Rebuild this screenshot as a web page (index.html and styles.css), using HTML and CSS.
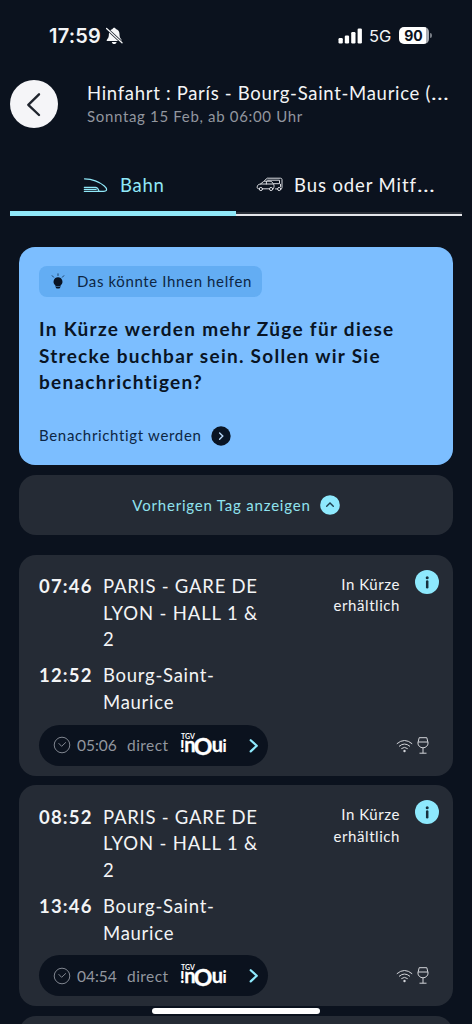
FILE: index.html
```html
<!DOCTYPE html>
<html lang="de">
<head>
<meta charset="utf-8">
<title>Hinfahrt</title>
<link rel="stylesheet" href="styles.css">
</head>
<body>
<svg class="defs" width="0" height="0" aria-hidden="true">
  <symbol id="clock" viewBox="0 0 18 18"><circle cx="9" cy="9" r="7.8"/><path d="M5.6 7.2l3 3.1 4.3-4"/></symbol>
  <symbol id="wifi" viewBox="0 0 17 14"><path d="M.8 4.8Q8.5-1.8 16.2 4.8M3 7.4q5.5-4.700 11 0M5.300 9.700q3.200-2.600 6.400 0"/><circle class="dot" cx="8.500" cy="12" r="1.200"/></symbol>
  <symbol id="glass" viewBox="0 0 12 17"><path d="M2.200.7h7.600l1.300 5.200c0 2.800-2.200 4.900-5.100 4.900S.9 8.700.9 5.900zM1 5h10M6 10.800v5.400M2.500 16.200h7"/></symbol>
</svg>
<div class="screen">
  <div class="status">
    <span class="clock">17:59</span>
    <svg class="bell" width="17" height="18" viewBox="0 0 17 18"><path fill="#f5f6f8" d="M8.200.8c.9 0 1.500.6 1.600 1.300 2.400.7 3.700 2.500 3.700 5 0 3.200.7 4.200 2 5.600.5.700.2 1.400-.6 1.400H1.500c-.8 0-1.100-.7-.6-1.400 1.300-1.400 2-2.400 2-5.600 0-2.500 1.300-4.300 3.700-5C6.700 1.400 7.300.8 8.200.8zM5.800 15h4.800c-.3 1.400-1.200 2.100-2.400 2.100S6.100 16.400 5.800 15z"/><path d="M.2 1.200l16 14.700" stroke="#0b121e" stroke-width="2.700"/><path d="M.6 1.500l15.400 14.300" stroke="#f5f6f8" stroke-width="1.300" stroke-linecap="round"/></svg>
    <svg class="signal" width="25" height="16" viewBox="0 0 25 16" fill="#fff"><rect x=".5" y="10" width="4.300" height="5.500" rx="1.200"/><rect x="6.800" y="7.500" width="4.300" height="8" rx="1.200"/><rect x="13.200" y="4" width="4.300" height="11.500" rx="1.200"/><rect x="19.600" y=".5" width="4.300" height="15" rx="1.200"/></svg>
    <span class="net">5G</span>
    <span class="battery">90</span><span class="nub"></span>
  </div>

  <header class="head">
    <span class="back"><svg width="48" height="48" viewBox="0 0 48 48" fill="none" stroke="#20252e" stroke-width="2.400" stroke-linecap="round" stroke-linejoin="round"><path d="M29 14.300L18.300 24.800 29 35"/></svg></span>
    <div class="titles">
      <div class="title">Hinfahrt : París - Bourg-Saint-Maurice (<span class="dots">…</span></div>
      <div class="subtitle">Sonntag 15 Feb, ab 06:00 Uhr</div>
    </div>
  </header>

  <nav class="tabs">
    <div class="tab active">
      <svg width="25" height="16" viewBox="0 0 25 16" fill="none" stroke="#90e8f8" stroke-width="1.200" stroke-linecap="round"><path d="M1.500 1.800c9.500.2 14.500 2.600 19.800 7.200 3.400 2.900 3 5.300-.8 5.300H1.300M1.300 10.300h11.200c1.700 0 2.800 1.700 3.500 3.800M1.300 12.300h11.900"/></svg>
      <span class="tab-a">Bahn</span>
    </div>
    <div class="tab">
      <svg width="27" height="15" viewBox="0 0 27 15" fill="none" stroke="#d9dbe0" stroke-width="1" stroke-linecap="round" stroke-linejoin="round"><path d="M8.500 3.600L11.300 1.200h13.200c1 0 1.500.5 1.500 1.500v7.800c0 1-.6 1.600-1.400 1.600M11.500 3.200h12v3.500h-5.700M3.200 11.800c-1.700 0-2.200-.6-2-1.900.2-1.900 1.300-2.500 3.300-2.900l2.700-2.200c.5-.4 1-.6 1.700-.6h5.200c.8 0 1.500.3 2 .9l1.500 2.100c.7.900.7 3.200-.4 4.600M6.600 11.800h6.800M4.500 7h12.700M10.400 4.300V7M19.500 11.900h2M24.500 7.300v2.200"/><circle cx="4.900" cy="12" r="1.600"/><circle cx="15.100" cy="12" r="1.600"/><circle cx="23.200" cy="12" r="1.600"/></svg>
      <span class="tab-b">Bus oder Mitf<span class="dots">…</span></span>
    </div>
  </nav>

  <main class="list">
    <section class="notice">
      <div class="hint">
        <svg width="16" height="17" viewBox="0 0 16 17"><path d="M8 4.300a4.400 4.400 0 0 1 2.700 7.900l-.5 2.200c-.6 1.600-3.800 1.600-4.400 0l-.5-2.200A4.400 4.400 0 0 1 8 4.300z" fill="#091424"/><path d="M8 .8v1.700M2.200 2.700l1.400 1.500M13.800 2.700l-1.400 1.500" stroke="#17395f" stroke-width=".9" stroke-linecap="round"/><path d="M5.800 13.500h4.300" stroke="#63adf3" stroke-width=".5"/></svg>
        <span class="hint-text">Das könnte Ihnen helfen</span>
      </div>
      <h2 class="question"><span class="q1">In Kürze werden mehr Züge für diese</span><br><span class="q2">Strecke buchbar sein. Sollen wir Sie</span><br><span class="q3">benachrichtigen?</span></h2>
      <div class="notify"><span class="notify-text">Benachrichtigt werden</span><svg width="20" height="20" viewBox="0 0 20 20" fill="none"><circle cx="10" cy="10" r="9.700" fill="#091424"/><path d="M8.600 6.900l3.200 3.200-3.200 3.200" stroke="#b9d8f8" stroke-width="1.400" stroke-linecap="round"/></svg></div>
    </section>

    <div class="previous"><span class="previous-text">Vorherigen Tag anzeigen</span><svg width="20" height="20" viewBox="0 0 20 20" fill="none"><circle cx="10" cy="10" r="9.800" fill="#8ee9fd"/><path d="M6.700 11.300L10 8l3.300 3.300" stroke="#1e3d4c" stroke-width="1.400" stroke-linecap="round"/></svg></div>

    <article class="trip">
      <div class="route">
        <span class="time">07:46</span><span class="place"><span class="p1">PARIS - GARE DE</span><br><span class="p2">LYON - HALL 1 &amp;</span><br>2</span>
        <span class="time">12:52</span><span class="place"><span class="p3">Bourg-Saint-</span><br><span class="p4">Maurice</span></span>
      </div>
      <div class="soon"><span class="s1">In Kürze</span><br><span class="s2">erhältlich</span></div>
      <svg class="info" width="24" height="24" viewBox="0 0 24 24"><circle cx="12" cy="12" r="12" fill="#8ee9fd"/><circle cx="12.200" cy="7.700" r="1.500" fill="#17313e"/><path d="M12.200 11.500v5.700" stroke="#17313e" stroke-width="2.500" stroke-linecap="round"/></svg>
      <div class="foot">
        <div class="details"><svg class="ico" width="18" height="18"><use href="#clock"/></svg><span class="duration">05:06</span><span class="direct">direct</span><svg class="inoui" width="48" height="24" viewBox="0 0 48 24"><text class="logo-tgv" x="1" y="6">TGV</text><text><tspan class="logo-mark" x="0" y="19.300">!</tspan><tspan class="logo-word" x="4.300" y="19.300">n</tspan><tspan class="logo-o" x="13.800" y="21.700">O</tspan><tspan class="logo-word" x="31.700" y="19.300">u</tspan><tspan class="logo-mark" x="42.600" y="19.300">i</tspan></text></svg><svg width="10" height="15" viewBox="0 0 10 15" fill="none" stroke="#8ee9fd" stroke-width="2.200" stroke-linecap="round" stroke-linejoin="round"><path d="M1.700 2.200L7.800 7.800l-6.100 5.600"/></svg></div>
        <div class="services"><svg class="ico" width="17" height="14"><use href="#wifi"/></svg><svg class="ico" width="12" height="17"><use href="#glass"/></svg></div>
      </div>
    </article>

    <article class="trip">
      <div class="route">
        <span class="time">08:52</span><span class="place"><span class="p1">PARIS - GARE DE</span><br><span class="p2">LYON - HALL 1 &amp;</span><br>2</span>
        <span class="time">13:46</span><span class="place"><span class="p3">Bourg-Saint-</span><br><span class="p4">Maurice</span></span>
      </div>
      <div class="soon"><span class="s1">In Kürze</span><br><span class="s2">erhältlich</span></div>
      <svg class="info" width="24" height="24" viewBox="0 0 24 24"><circle cx="12" cy="12" r="12" fill="#8ee9fd"/><circle cx="12.200" cy="7.700" r="1.500" fill="#17313e"/><path d="M12.200 11.500v5.700" stroke="#17313e" stroke-width="2.500" stroke-linecap="round"/></svg>
      <div class="foot">
        <div class="details"><svg class="ico" width="18" height="18"><use href="#clock"/></svg><span class="duration">04:54</span><span class="direct">direct</span><svg class="inoui" width="48" height="24" viewBox="0 0 48 24"><text class="logo-tgv" x="1" y="6">TGV</text><text><tspan class="logo-mark" x="0" y="19.300">!</tspan><tspan class="logo-word" x="4.300" y="19.300">n</tspan><tspan class="logo-o" x="13.800" y="21.700">O</tspan><tspan class="logo-word" x="31.700" y="19.300">u</tspan><tspan class="logo-mark" x="42.600" y="19.300">i</tspan></text></svg><svg width="10" height="15" viewBox="0 0 10 15" fill="none" stroke="#8ee9fd" stroke-width="2.200" stroke-linecap="round" stroke-linejoin="round"><path d="M1.700 2.200L7.800 7.800l-6.100 5.600"/></svg></div>
        <div class="services"><svg class="ico" width="17" height="14"><use href="#wifi"/></svg><svg class="ico" width="12" height="17"><use href="#glass"/></svg></div>
      </div>
    </article>
    <article class="trip"></article>
  </main>
  <div class="home-bar"></div>
</div>
</body>
</html>
```
FILE: styles.css
```css
* { box-sizing: border-box; }
html, body { margin: 0; overflow: hidden; background: #0b121e; }
body { font-family: Lato, "Open Sans", sans-serif; color: #f3f4f6; white-space: nowrap; }
svg { display: block; flex: none; }
.defs { position: absolute; }
.screen { position: relative; width: 472px; height: 1024px; overflow: hidden; }

.status { display: flex; align-items: center; height: 71px; padding: 0 40px 0 49px; font-family: Inter, sans-serif; }
.status .clock { font-size: 20px; font-weight: 600; letter-spacing: .2px; width: 57px; }
.signal { margin-left: auto; margin-right: 6px; }
.net { font-size: 16.500px; font-weight: 400; width: 30px; }
.battery { width: 30px; height: 17px; border-radius: 5px; background: linear-gradient(90deg, #fff 27px, #aaadb3 27px); color: #0b121e; font-size: 14px; font-weight: 700; line-height: 17px; text-align: center; padding-right: 1px; }
.nub { width: 2px; height: 5px; border-radius: 0 2px 2px 0; background: #777c85; margin-left: 1px; }

.head { display: flex; height: 89px; padding: 9px 0 0 10px; }
.back { width: 48px; height: 48px; border-radius: 50%; background: #f5f5f8; }
.titles { padding: 1px 0 0 29px; }
.title { font-size: 18.500px; line-height: 24px; letter-spacing: .7px; }
.subtitle { font-size: 15px; line-height: 22px; letter-spacing: .67px; color: #92969f; }
.dots { font-size: 20px; line-height: 0; display: inline-block; transform: scaleX(1.180); transform-origin: left; }

.tabs { display: flex; height: 56px; margin: 0 10px; }
.tab { display: flex; align-items: center; width: 226px; height: 56px; padding: 0 0 5px 20px; font-size: 18.500px; gap: 11px; border-bottom: 2px solid #e5e6ea; box-shadow: inset 0 -2px #292e37; }
.tab.active { color: #90e8f8; padding: 0 0 2px 73px; gap: 12px; border-bottom: 5px solid #90e8f8; box-shadow: none; }
.tab-a { letter-spacing: .75px; }
.tab-b { letter-spacing: .9px; }

.list { padding: 31px 19px 0; }
.notice { height: 218px; border-radius: 16px; background: #7cbeff; color: #091424; padding: 19px 20px; margin-bottom: 10px; }
.hint { display: flex; align-items: center; width: 223px; height: 31px; border-radius: 8px; background: #63adf3; padding: 0 0 0 11px; gap: 11px; font-size: 15px; color: #0d2644; }
.hint-text { padding-bottom: 2px; }
.question { margin: 19px 0 0; font-size: 19px; font-weight: 700; line-height: 26.600px; }
.notify { display: flex; align-items: center; margin-top: 30.500px; gap: 9px; font-size: 15px; color: #0d2644; }
.notify-text { padding-bottom: 2px; }
.previous { display: flex; justify-content: center; align-items: center; gap: 9px; height: 60px; border-radius: 17px; background: #252b35; color: #90e2ee; font-size: 15px; margin-bottom: 19.500px; }

.trip { position: relative; height: 221px; border-radius: 17px; background: #252b35; margin-bottom: 9.700px; padding: 18.500px 14px 0 20px; display: grid; grid-template-columns: 1fr auto 24px; grid-template-rows: 151.500px 41px; }
.route { display: grid; grid-template-columns: 64px 1fr; align-content: start; row-gap: 9.500px; font-size: 18.500px; line-height: 26.600px; }
.time { font-weight: 700; letter-spacing: 1.200px; }
.soon { font-size: 15px; line-height: 21.700px; text-align: right; margin: .5px 15px 0 0; }
.info { margin-top: -3.500px; }
.foot { grid-column: 1 / -1; display: flex; justify-content: space-between; }
.details { display: flex; align-items: center; width: 229px; height: 41px; border-radius: 21px; background: #0b121e; color: #92969f; font-size: 15.500px; padding-left: 14px; }
.duration { width: 56px; padding-left: 6px; }
.direct { width: 53px; }
.ico { fill: none; stroke: #d2d4d9; stroke-width: 1; }
.details .ico { stroke: #80858f; }
.dot { fill: #d2d4d9; stroke: none; }
.inoui { fill: #fff; margin-right: 20.500px; overflow: visible; }
.logo-tgv { font: 700 7px Lato, sans-serif; }
.logo-mark { font: 900 16px Lato, sans-serif; }
.logo-word { font: 700 20px Lato, sans-serif; stroke: #fff; stroke-width: .3px; }
.logo-o { font: 700 23px Lato, sans-serif; stroke: #fff; stroke-width: .5px; }
.services { display: flex; align-items: center; gap: 4px; padding-right: 10px; }
.services .ico:first-child { margin-top: 1px; }
.home-bar { position: absolute; left: 152px; bottom: 10px; width: 168px; height: 6px; border-radius: 3px; background: #fff; }

.hint-text { letter-spacing: .63px; }
.notify-text { letter-spacing: .67px; }
.previous-text { letter-spacing: .8px; }
.q1 { letter-spacing: 1.300px; }
.q2 { letter-spacing: 1.260px; }
.q3 { letter-spacing: 1.270px; }
.p1 { letter-spacing: .75px; }
.p2 { letter-spacing: .85px; }
.p3, .p4 { letter-spacing: .73px; }
.s1, .s2 { letter-spacing: .56px; }
.duration { letter-spacing: 0; }
.direct { letter-spacing: .45px; }
```
